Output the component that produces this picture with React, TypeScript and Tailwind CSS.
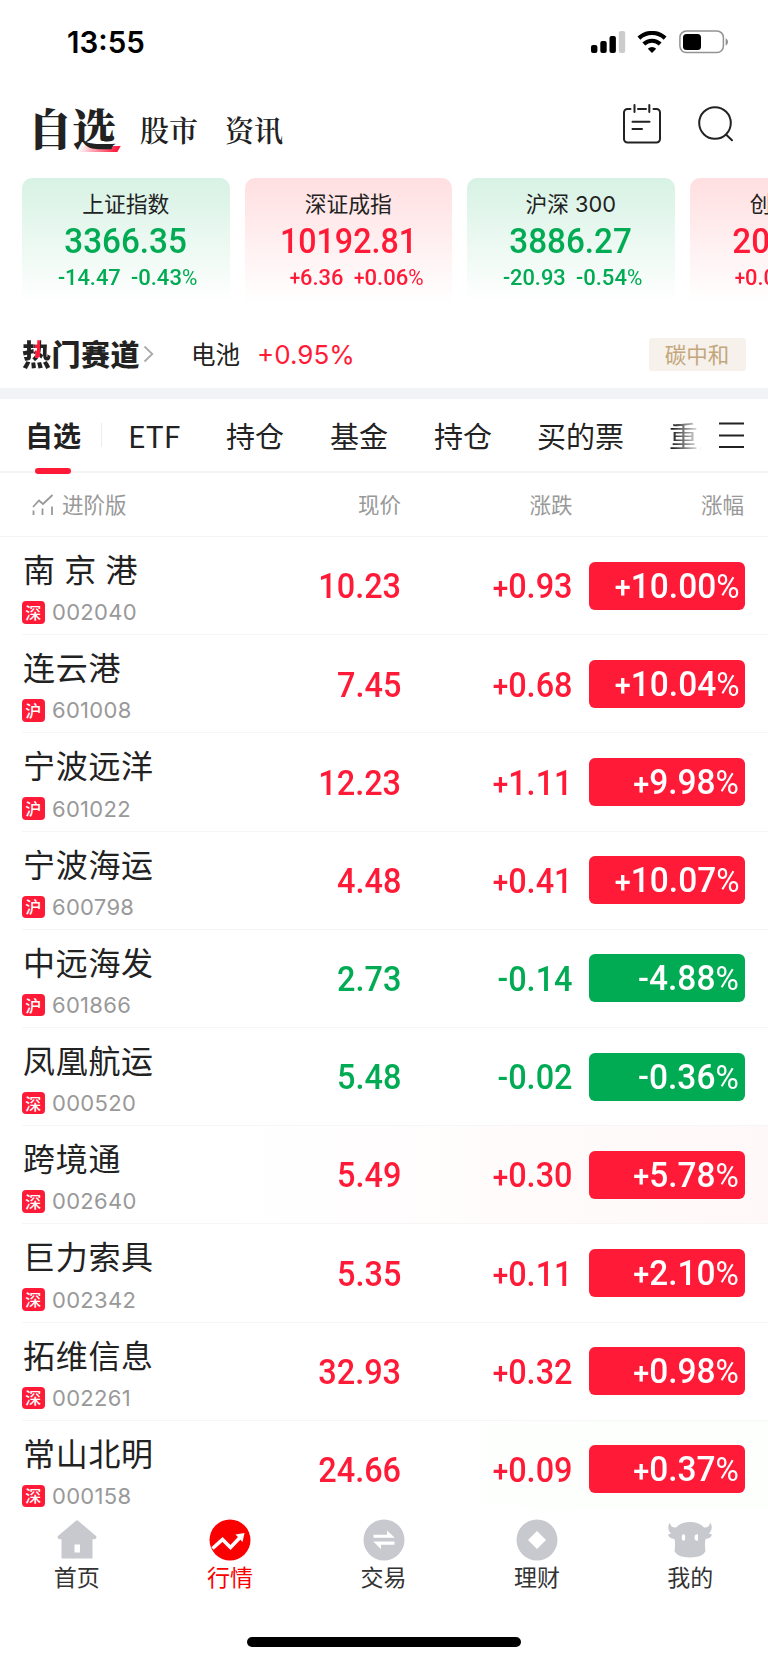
import type { ReactNode } from 'react'
import clsx from 'clsx'

interface Quote {
  name: string
  market: '深' | '沪'
  code: string
  price: string
  change: string
  percent: string
  spaced?: boolean
  flash?: string
}

interface IndexCardData {
  name: string
  value: string
  change: string
  percent: string
}

const INDICES: IndexCardData[] = [
  { name: '上证指数', value: '3366.35', change: '-14.47', percent: '-0.43%' },
  { name: '深证成指', value: '10192.81', change: '+6.36', percent: '+0.06%' },
  { name: '沪深 300', value: '3886.27', change: '-20.93', percent: '-0.54%' },
  { name: '创业板指', value: '2011.28', change: '+0.05', percent: '+0.01%' },
]

const QUOTES: Quote[] = [
  { name: '南京港', market: '深', code: '002040', price: '10.23', change: '+0.93', percent: '+10.00%', spaced: true },
  { name: '连云港', market: '沪', code: '601008', price: '7.45', change: '+0.68', percent: '+10.04%' },
  { name: '宁波远洋', market: '沪', code: '601022', price: '12.23', change: '+1.11', percent: '+9.98%' },
  { name: '宁波海运', market: '沪', code: '600798', price: '4.48', change: '+0.41', percent: '+10.07%' },
  { name: '中远海发', market: '沪', code: '601866', price: '2.73', change: '-0.14', percent: '-4.88%' },
  { name: '凤凰航运', market: '深', code: '000520', price: '5.48', change: '-0.02', percent: '-0.36%' },
  { name: '跨境通', market: '深', code: '002640', price: '5.49', change: '+0.30', percent: '+5.78%', flash: 'bg-linear-to-r from-white from-30% to-[#fff8f8]' },
  { name: '巨力索具', market: '深', code: '002342', price: '5.35', change: '+0.11', percent: '+2.10%' },
  { name: '拓维信息', market: '深', code: '002261', price: '32.93', change: '+0.32', percent: '+0.98%' },
  { name: '常山北明', market: '深', code: '000158', price: '24.66', change: '+0.09', percent: '+0.37%', flash: 'bg-linear-to-r from-white from-30% to-[#fcfffc]' },
]

const isDown = (value: string) => value.startsWith('-')

// Sign and percent mark are set smaller than the digits
function Figure({ value, className }: { value: string; className?: string }) {
  const [, sign, digits, unit] = value.match(/^([+-]?)([\d.]+)(%?)$/) ?? []
  return (
    <span className={clsx('inline-flex items-baseline whitespace-nowrap font-[Roboto,sans-serif]', className)}>
      {sign && (
        <span className={clsx('relative bottom-[0.02em]', sign === '-' ? 'text-[0.96em]' : 'text-[0.86em]')}>{sign}</span>
      )}
      <span>{digits}</span>
      {unit && <span className="text-[0.95em] font-normal">{unit}</span>}
    </span>
  )
}

function StatusBar() {
  return (
    <div className="flex h-[84px] shrink-0 items-center justify-between pl-[67px] pr-[39px]">
      <span className="pt-[2px] font-[Inter,sans-serif] text-[29.500px] font-semibold leading-none">13:55</span>
      <div className="flex items-center">
        <svg width="35" height="22" viewBox="0 0 35 22">
          <rect x="0" y="14" width="6.4" height="8" rx="2" />
          <rect x="9.3" y="10" width="6.4" height="12" rx="2" />
          <rect x="18.5" y="5" width="6.4" height="17" rx="2" />
          <rect x="27.8" y="0" width="6.4" height="22" rx="2" fill="#cccccc" />
        </svg>
        <svg className="ml-[11px]" width="30" height="22" viewBox="0 0 30 22" fill="none" stroke="#000" strokeWidth="4.2">
          <path d="M1.9 7.1A19.3 19.3 0 0 1 28.1 7.1" />
          <path d="M6.8 13A12 12 0 0 1 23.2 13" />
          <path d="M15 22L10.8 17.7A6.3 6.3 0 0 1 19.2 17.7Z" fill="#000" stroke="none" />
        </svg>
        <svg className="ml-3" width="50" height="24" viewBox="0 0 50 24">
          <rect x="0.9" y="1" width="43.5" height="21.6" rx="6.5" fill="none" stroke="#929292" strokeWidth="1.5" />
          <rect x="4" y="4" width="18" height="16" rx="3.5" />
          <path d="M46.6 8.2c3.2 1.4 3.2 6 0 7.4z" fill="#929292" />
        </svg>
      </div>
    </div>
  )
}

function TopNav() {
  return (
    <div className="flex h-[94px] shrink-0 items-center pl-[28px] pr-[34px] font-['Noto_Serif_CJK_SC','Noto_Sans_CJK_SC',serif] text-[#222]">
      <div className="relative mb-[9px] w-[90px] whitespace-nowrap text-[44px] font-black leading-none">
        <span className="absolute bottom-[-3px] right-[-1px] h-[6px] w-[40px] -skew-x-[30deg] bg-linear-to-r from-transparent to-[#ff1035]" />
        <span className="relative">自选</span>
      </div>
      <span className="mb-[3px] ml-[22px] text-[29px] font-semibold leading-none">股市</span>
      <span className="mb-[3px] ml-[27px] text-[29px] font-semibold leading-none">资讯</span>
      <svg className="mb-[14px] ml-auto" width="40" height="42" viewBox="0 0 40 42" fill="none" stroke="#222" strokeWidth="2" strokeLinecap="round">
        <path d="M8.5 6H5.5a3.5 3.5 0 0 0-3.5 3.5V36a3.5 3.5 0 0 0 3.5 3.5h29A3.5 3.5 0 0 0 38 36V9.500a3.5 3.5 0 0 0-3.5-3.500h-3M16 6h8M12.500 2v7M27.300 2v7M10.500 18.800h17M10.500 26h9.500" />
      </svg>
      <svg className="mb-[14px] ml-[36px]" width="36" height="36" viewBox="0 0 36 36" fill="none" stroke="#222" strokeWidth="2" strokeLinecap="round">
        <circle cx="17" cy="17" r="15.8" />
        <path d="M28.500 29L34 34.300" />
      </svg>
    </div>
  )
}

function IndexCard({ item }: { item: IndexCardData }) {
  const down = isDown(item.change)
  return (
    <div
      className={clsx(
        'flex h-[125px] w-[207.500px] shrink-0 flex-col items-center rounded-t-[10px] bg-linear-to-b to-white',
        down ? 'from-[#d7f2e4] text-[#00ab53]' : 'from-[#ffdfe1] text-[#ff1b37]',
      )}
    >
      <span className="mt-[15px] font-[Inter,'Noto_Sans_CJK_SC',sans-serif] text-[21.800px] leading-[22px] text-[#222]">{item.name}</span>
      <Figure
        value={item.value}
        className={clsx('mt-[9px] text-[35px] font-medium leading-[36px]', item.value.length > 7 ? 'scale-x-[0.92]' : 'scale-x-[0.95]')}
      />
      <div className={clsx('mt-[5px] flex gap-[11px] text-[22.500px] font-medium leading-[24px]', down ? 'pl-[3px]' : 'pl-[17px]')}>
        <Figure value={item.change} className="origin-right scale-x-[0.97]" />
        <Figure value={item.percent} className="origin-left scale-x-[0.98]" />
      </div>
    </div>
  )
}

function HotTrack() {
  return (
    <div className="flex h-[85px] shrink-0 items-center px-[22px] pt-[17px]">
      <span className="mb-[2px] flex text-[29px] font-black leading-[34px] tracking-[0.5px] text-[#222]">
        <span className="bg-[#222] bg-[linear-gradient(#ff1b37,#ff1b37)] bg-[length:5px_19px] bg-[position:13px_3px] bg-clip-text bg-no-repeat text-transparent">热</span>
        门赛道
      </span>
      <svg className="ml-[3px]" width="11" height="18" viewBox="0 0 11 18" fill="none" stroke="#aaa" strokeWidth="1.8">
        <path d="M1.500 1.500L9.300 9 1.500 16.500" />
      </svg>
      <span className="ml-[37px] text-[24.500px] leading-none text-[#222]">电池</span>
      <span className="ml-[17px] pt-px font-[Inter,sans-serif] text-[26px] leading-none text-[#ff1b37]">+0.95%</span>
      <span className="ml-auto flex h-[33px] w-[97px] items-center justify-center rounded-[3px] bg-[#f6f1ea] pb-[1px] pr-[1px] text-[21.500px] leading-none text-[#c4a67c]">
        碳中和
      </span>
    </div>
  )
}

function GroupTabs() {
  return (
    <div className="flex h-[74px] shrink-0 items-center border-b-2 border-[#f4f4f6] pl-[25px] pr-[24px] text-[29px] leading-none text-[#222]">
      <div className="relative flex h-full items-center text-[28px] font-bold">
        自选
        <span className="absolute bottom-[-3px] left-[10px] h-[6px] w-[36px] rounded-full bg-[#ff1b37]" />
      </div>
      <span className="ml-[20px] h-6 w-px bg-[#ececee]" />
      <span className="ml-[26px] w-[53px] text-[30px]">ETF</span>
      <span className="ml-[45px]">持仓</span>
      <span className="ml-[46px]">基金</span>
      <span className="ml-[46px]">持仓</span>
      <span className="ml-[45px]">买的票</span>
      <span className="ml-[45px] w-[33px] overflow-hidden whitespace-nowrap bg-linear-to-r from-[#222] from-10% to-transparent bg-clip-text py-1 text-transparent">
        重点
      </span>
      <svg className="ml-auto mt-px" width="25" height="27" viewBox="0 0 25 27" stroke="#222" strokeWidth="2">
        <path d="M0 1.500h25M0 13.500h25M0 25h25" />
      </svg>
    </div>
  )
}

function TableHeader() {
  return (
    <div className="flex h-[64px] shrink-0 items-center border-b border-[#f4f4f6] pb-[2px] pl-[32px] pr-[24px] text-[21.500px] leading-none text-[#999]">
      <svg className="mt-[1px]" width="22" height="21" viewBox="0 0 22 21" fill="none" stroke="#999" strokeWidth="1.800">
        <path d="M1 13L7 6.500l4 3.500L20.500 1M1.500 16.500V21M10.500 14.500V21M20 12.500V21" />
      </svg>
      <span className="ml-[8px] w-[110px]">进阶版</span>
      <span className="ml-auto w-[171px] text-right">现价</span>
      <span className="w-[171.500px] text-right">涨跌</span>
      <span className="w-[171.500px] text-right">涨幅</span>
    </div>
  )
}

function QuoteRow({ quote }: { quote: Quote }) {
  const down = isDown(quote.change)
  return (
    <div className={clsx('h-[98.200px] shrink-0 pl-[22px]', quote.flash)}>
      <div className={clsx('flex h-full border-b border-[#f6f6f7] pr-[23px]', down ? 'text-[#00ab53]' : 'text-[#ff1b37]')}>
        <div className="w-[178px] pt-[13px]">
          <div className={clsx('pl-px text-[32px] leading-[36px] text-[#222]', quote.spaced ? 'tracking-[9.300px]' : 'tracking-[0.700px]')}>
            {quote.name}
          </div>
          <div className="mt-[15px] flex items-center">
            <span className="flex size-[22.500px] items-center justify-center rounded-[4px] bg-[#ff1b37] pb-px text-[16px] font-medium leading-none text-white">
              {quote.market}
            </span>
            <span className="ml-[7.500px] font-[Inter,sans-serif] text-[22px] leading-none tracking-[0.300px] text-[#999]">{quote.code}</span>
          </div>
        </div>
        <div className="flex flex-1 items-center justify-end text-[34.500px] font-medium leading-none">
          <Figure value={quote.price} className="origin-right scale-x-[0.94] pt-[2px]" />
          <Figure value={quote.change} className="w-[171.500px] origin-right scale-x-[0.94] justify-end pt-[2px]" />
          <span
            className={clsx(
              'ml-[16px] flex h-[48px] w-[156.500px] items-center justify-end rounded-[6px] pr-[6px] text-white',
              down ? 'bg-[#00ab53]' : 'bg-[#ff1b37]',
            )}
          >
            <Figure value={quote.percent} className="origin-right scale-x-[0.97] pt-[1px]" />
          </span>
        </div>
      </div>
    </div>
  )
}

function NavItem({ label, active, children }: { label: string; active?: boolean; children: ReactNode }) {
  return (
    <div className={clsx('flex flex-1 flex-col items-center', active ? 'text-[#fa0000]' : 'text-[#333]')}>
      <svg width="46" height="42" viewBox="0 0 46 42" fill={active ? '#fa0000' : '#c8c9cf'}>
        {children}
      </svg>
      <span className="mt-[3px] text-[23px] leading-[24px]">{label}</span>
    </div>
  )
}

function BottomNav() {
  return (
    <div className="flex h-[154px] shrink-0 flex-col bg-white">
      <div className="flex pr-[1px] pt-[10px]">
        <NavItem label="首页">
          <path d="M22 1.700q1-.8 2 0L42.300 17.300q.8 2.700-2.300 3H38.500V39.500H7.500V20.300H6Q2.900 20 3.700 17.300ZM20.500 25.500v8h5.500v-8Z" fillRule="evenodd" />
        </NavItem>
        <NavItem label="行情" active>
          <circle cx="23" cy="21" r="20.500" />
          <path d="M5.500 29.500L15.500 20.500l8 8L33 18.500" fill="none" stroke="#fff" strokeWidth="3.600" />
          <path d="M28.500 15.500L37.500 14 35.500 23Z" fill="#fff" />
        </NavItem>
        <NavItem label="交易">
          <circle cx="23" cy="21" r="20.500" />
          <path d="M12.500 18.700h21.300L26 11.500v4.200H12.500ZM33.500 22.600H12.200L20 30v-4.300h13.500Z" fill="#fff" />
        </NavItem>
        <NavItem label="理财">
          <circle cx="23" cy="21" r="20.500" />
          <path d="M23 12l9 9-9 9-9-9Z" fill="#fff" />
        </NavItem>
        <NavItem label="我的">
          <path d="M3 3.500Q3.500 9 9 8.500 14 3 23 3T37 8.500Q42.500 9 43 3.500 47 9 42 14.500L45 15.500Q44 19.500 38.500 20 37.500 25 38.500 32 36 38.500 23 38.500T7.500 32Q8.500 25 7.500 20 2 19.500 1 15.500L4 14.500Q-1 9 3 3.500Z" />
          <ellipse cx="16.500" cy="18.500" rx="1.700" ry="3.200" fill="#fff" />
          <path d="M31 15.300v6.400Q27.500 22 27.500 18.500T31 15.300Z" fill="#fff" />
        </NavItem>
      </div>
      <div className="mx-auto mb-[16px] mt-auto h-[10px] w-[274px] rounded-full bg-black" />
    </div>
  )
}

export default function App() {
  return (
    <div className="flex h-[1663px] w-[768px] flex-col overflow-hidden bg-white font-['Noto_Sans_CJK_SC',sans-serif] text-black">
      <StatusBar />
      <TopNav />
      <div className="flex shrink-0 gap-[15px] overflow-hidden pl-[22px]">
        {INDICES.map((item) => (
          <IndexCard key={item.name} item={item} />
        ))}
      </div>
      <HotTrack />
      <div className="h-[11px] shrink-0 bg-[#f2f3f6]" />
      <GroupTabs />
      <TableHeader />
      <div className="flex min-h-0 flex-1 flex-col overflow-hidden">
        {QUOTES.map((quote) => (
          <QuoteRow key={quote.code} quote={quote} />
        ))}
      </div>
      <BottomNav />
    </div>
  )
}
